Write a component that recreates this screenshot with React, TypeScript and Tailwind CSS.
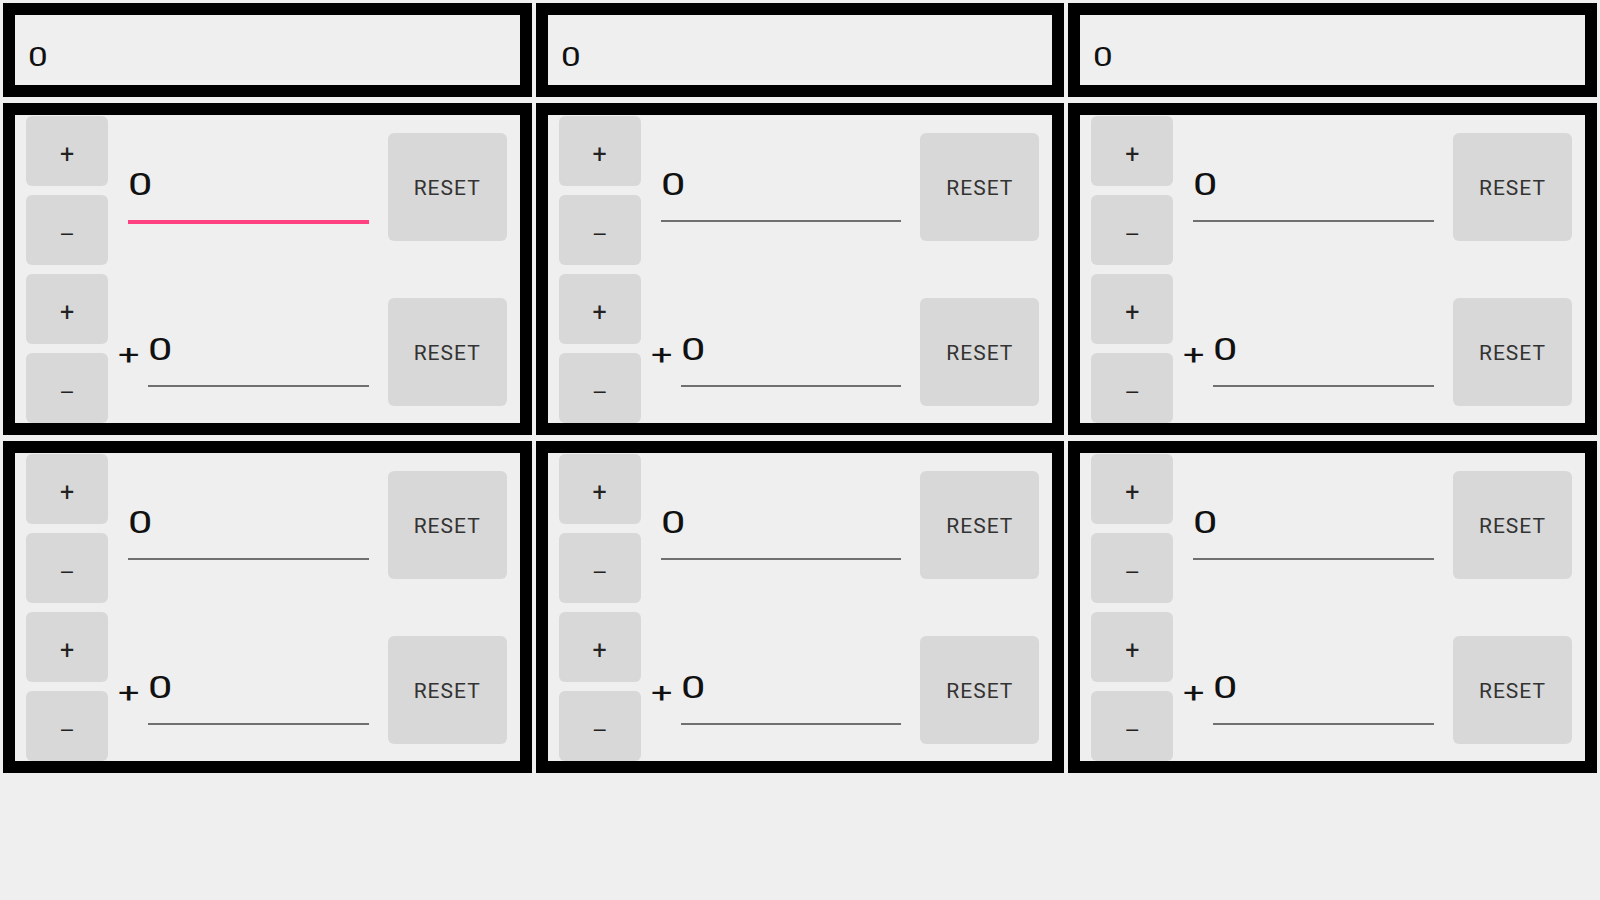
import React from 'react';

const stepBtn =
  'h-[70px] w-full shrink-0 rounded-[6px] bg-[#d8d8d8] flex items-center justify-center pt-[6px] text-[25px] leading-none text-[#222] font-[Roboto,sans-serif]';

const minusGlyph = 'text-[19px] font-["DejaVu_Sans",sans-serif]';

const resetBtn =
  'w-[119px] h-[108px] shrink-0 rounded-[6px] bg-[#d8d8d8] flex items-center justify-center pt-[4px] text-[21px] tracking-[1px] text-[#333] font-[Roboto,sans-serif]';

const TotalBox: React.FC<{ value: number }> = ({ value }) => (
  <div className="h-[94px] border-[12px] border-black bg-[#efefef]">
    <div className="pl-[13px] pt-[27px] text-[26px] leading-[30px] text-[#111] font-[Roboto,sans-serif]">
      <span className="inline-block origin-left scale-x-[1.35]">{value}</span>
    </div>
  </div>
);

const ValueField: React.FC<{ value: number; focused?: boolean }> = ({ value, focused }) => (
  <div
    className={
      focused
        ? 'flex-1 mt-[34px] pb-[17px] border-b-4 border-[#ff4081]'
        : 'flex-1 mt-[34px] pb-[17px] border-b-2 border-[#707070]'
    }
  >
    <div className="h-[36px] text-[31px] leading-[36px] text-[#111] font-[Roboto,sans-serif]">
      <span className="inline-block origin-left scale-x-[1.4]">{value}</span>
    </div>
  </div>
);

const CounterCell: React.FC<{ focused?: boolean }> = ({ focused }) => {
  const a = 0;
  const b = 0;
  return (
    <div className="h-[332px] border-[12px] border-black bg-[#efefef] flex overflow-hidden">
      {/* steppers */}
      <div className="ml-[11px] w-[82px] flex flex-col gap-[9px] pt-[1px]">
        <button className={stepBtn}>+</button>
        <button className={stepBtn}>
          <span className={minusGlyph}>−</span>
        </button>
        <button className={stepBtn}>+</button>
        <button className={stepBtn}>
          <span className={minusGlyph}>−</span>
        </button>
      </div>

      {/* values + reset */}
      <div className="flex-1 pr-[13px] flex flex-col justify-center gap-[57px]">
        <div className="h-[108px] flex items-start">
          <div className="ml-[20px] mr-[19px] flex-1 flex">
            <ValueField value={a} focused={focused} />
          </div>
          <button className={resetBtn}>RESET</button>
        </div>
        <div className="h-[108px] flex items-start">
          <span className="ml-[10px] w-[20px] mt-[42px] text-[27px] leading-[30px] text-[#111] font-[Roboto,sans-serif]">
            <span className="inline-block origin-left scale-x-[1.4]">+</span>
          </span>
          <div className="ml-[10px] mr-[19px] flex-1 flex">
            <ValueField value={b} />
          </div>
          <button className={resetBtn}>RESET</button>
        </div>
      </div>
    </div>
  );
};

export default function App() {
  const cols = [0, 1, 2];
  return (
    <div className="min-h-[900px] w-full bg-[#efefef]">
      <div className="grid grid-cols-3 gap-x-[4px] gap-y-[6px] p-[3px]">
        {cols.map((c) => (
          <TotalBox key={`t${c}`} value={0} />
        ))}
        {cols.map((c) => (
          <CounterCell key={`a${c}`} focused={c === 0} />
        ))}
        {cols.map((c) => (
          <CounterCell key={`b${c}`} />
        ))}
      </div>
    </div>
  );
}
